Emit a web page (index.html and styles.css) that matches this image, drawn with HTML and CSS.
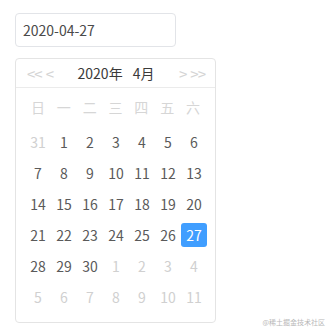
FILE: index.html
```html
<!DOCTYPE html>
<html lang="zh">
<head>
    <meta charset="UTF-8">
    <meta name="viewport" content="width=device-width, initial-scale=1.0">
    <title>Date Picker</title>
    <link rel="stylesheet" href="styles.css">
</head>
<body>
    <div class="page">
        <div class="date-input">2020-04-27</div>

        <div class="calendar">
            <div class="cal-head">
                <div class="nav">
                    <span>&lt;&lt;</span>
                    <span>&lt;</span>
                </div>
                <div class="title">
                    <span>2020年</span>
                    <span>4月</span>
                </div>
                <div class="nav">
                    <span>&gt;</span>
                    <span>&gt;&gt;</span>
                </div>
            </div>

            <div class="cal-body">
                <div class="week">
                    <span>日</span><span>一</span><span>二</span><span>三</span><span>四</span><span>五</span><span>六</span>
                </div>
                <div class="days">
                    <span class="other">31</span><span>1</span><span>2</span><span>3</span><span>4</span><span>5</span><span>6</span>
                    <span>7</span><span>8</span><span>9</span><span>10</span><span>11</span><span>12</span><span>13</span>
                    <span>14</span><span>15</span><span>16</span><span>17</span><span>18</span><span>19</span><span>20</span>
                    <span>21</span><span>22</span><span>23</span><span>24</span><span>25</span><span>26</span><span class="active">27</span>
                    <span>28</span><span>29</span><span>30</span><span class="other">1</span><span class="other">2</span><span class="other">3</span><span class="other">4</span>
                    <span class="other">5</span><span class="other">6</span><span class="other">7</span><span class="other">8</span><span class="other">9</span><span class="other">10</span><span class="other">11</span>
                </div>
            </div>
        </div>
    </div>

    <div class="watermark">@稀土掘金技术社区</div>
</body>
</html>
```

FILE: styles.css
```css
body {
    margin: 0;
    background: white;
    font-family: "Noto Sans CJK SC", "Noto Sans", sans-serif;
    color: #5a5a5a;
}
.page {
    padding: 13px 0 0 15px;
}
.date-input {
    box-sizing: border-box;
    width: 161px;
    height: 34px;
    border: 1px solid #e2e4e8;
    border-radius: 4px;
    padding: 0 7px;
    font-size: 14px;
    line-height: 32px;
    color: #4a4a4a;
}
.calendar {
    box-sizing: border-box;
    width: 201px;
    height: 265px;
    margin-top: 11px;
    border: 1px solid #e4e4e4;
    border-radius: 4px;
}
.cal-head {
    height: 28px;
    border-bottom: 1px solid #ebebeb;
    display: flex;
    align-items: center;
    justify-content: space-between;
    padding: 0 10px 0 11px;
}
.nav {
    display: flex;
    gap: 4px;
    font-size: 15px;
    color: #d4d4d4;
    letter-spacing: -1px;
}
.title {
    display: flex;
    gap: 10px;
    font-size: 14px;
    color: #3a3a3a;
}
.cal-body {
    padding: 4px 9px 0;
}
.week, .days {
    display: grid;
    grid-template-columns: repeat(7, 1fr);
}
.week {
    margin-bottom: 3px;
}
.week span {
    height: 31px;
    line-height: 31px;
    text-align: center;
    font-size: 14px;
    color: #d6d6d6;
}
.days span {
    justify-self: center;
    align-self: center;
    width: 26px;
    height: 24px;
    margin: 3.5px 0;
    line-height: 24px;
    text-align: center;
    font-size: 14px;
    border-radius: 3px;
}
.days .other {
    color: #d0d0d0;
}
.days .active {
    background: #409eff;
    color: white;
}
.watermark {
    position: absolute;
    right: 3px;
    bottom: 1px;
    font-size: 7px;
    color: #b8b8b8;
}
```
